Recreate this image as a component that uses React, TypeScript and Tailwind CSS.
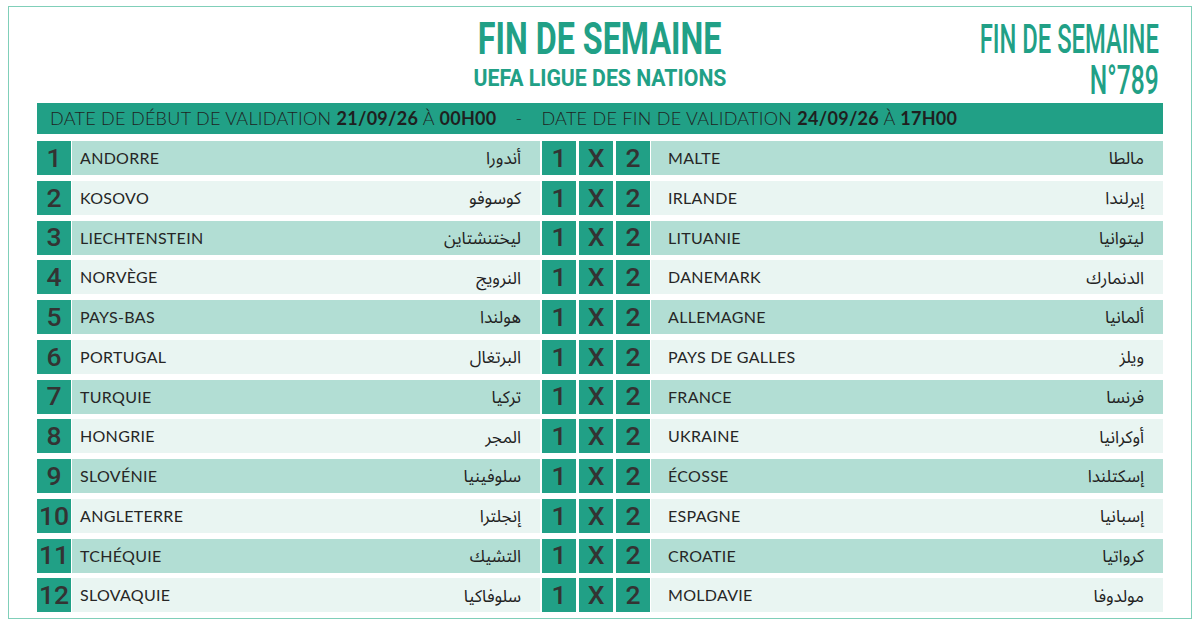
const rows = [
  { n: 1, home: "ANDORRE", homeAr: "أندورا", away: "MALTE", awayAr: "مالطا" },
  { n: 2, home: "KOSOVO", homeAr: "كوسوفو", away: "IRLANDE", awayAr: "إيرلندا" },
  { n: 3, home: "LIECHTENSTEIN", homeAr: "ليختنشتاين", away: "LITUANIE", awayAr: "ليتوانيا" },
  { n: 4, home: "NORVÈGE", homeAr: "النرويج", away: "DANEMARK", awayAr: "الدنمارك" },
  { n: 5, home: "PAYS-BAS", homeAr: "هولندا", away: "ALLEMAGNE", awayAr: "ألمانيا" },
  { n: 6, home: "PORTUGAL", homeAr: "البرتغال", away: "PAYS DE GALLES", awayAr: "ويلز" },
  { n: 7, home: "TURQUIE", homeAr: "تركيا", away: "FRANCE", awayAr: "فرنسا" },
  { n: 8, home: "HONGRIE", homeAr: "المجر", away: "UKRAINE", awayAr: "أوكرانيا" },
  { n: 9, home: "SLOVÉNIE", homeAr: "سلوفينيا", away: "ÉCOSSE", awayAr: "إسكتلندا" },
  { n: 10, home: "ANGLETERRE", homeAr: "إنجلترا", away: "ESPAGNE", awayAr: "إسبانيا" },
  { n: 11, home: "TCHÉQUIE", homeAr: "التشيك", away: "CROATIE", awayAr: "كرواتيا" },
  { n: 12, home: "SLOVAQUIE", homeAr: "سلوفاكيا", away: "MOLDAVIE", awayAr: "مولدوفا" },
];

function Box({ children }: { children: React.ReactNode }) {
  return (
    <div className="w-[34px] shrink-0 bg-[#21a086] flex items-center justify-center font-['Roboto',sans-serif] font-medium text-[26.5px] leading-none text-[#333]">
      {children}
    </div>
  );
}

function Team({ name, ar, className }: { name: string; ar: string; className: string }) {
  return (
    <div className={className}>
      <span className="font-['Lato',sans-serif] text-[16px] tracking-[0.3px] text-[#262626]">{name}</span>
      <span dir="rtl" className="font-['Noto_Sans_Arabic','DejaVu_Sans',sans-serif] text-[17px] text-[#222] pt-[4px]">
        {ar}
      </span>
    </div>
  );
}

export default function App() {
  return (
    <div className="w-[1200px] h-[630px] bg-white pl-[8px] pt-[6px]">
      <div className="w-[1184px] h-[613px] border border-[#80cfb9] px-[28px] flex flex-col">
        <header className="h-[96px] shrink-0 grid grid-cols-[1fr_auto_1fr]">
          <div />
          <div className="flex flex-col items-center pt-[11px] text-[#21a086] font-['Roboto',sans-serif] font-bold">
            <div className="text-[43.6px] leading-[43.6px] scale-x-[0.74]">FIN DE SEMAINE</div>
            <div className="mt-[4px] text-[24px] leading-[24px] scale-x-[0.885]">UEFA LIGUE DES NATIONS</div>
          </div>
          <div className="flex flex-col items-end pt-[12px] pr-[4px] text-[#21a086] font-['Roboto',sans-serif] font-medium text-[41px] leading-[40.5px]">
            <div className="origin-right scale-x-[0.58]">FIN DE SEMAINE</div>
            <div className="origin-right scale-x-[0.6]">N°789</div>
          </div>
        </header>

        <div className="h-[31px] shrink-0 bg-[#21a086] flex items-center pl-[13px] font-['Lato',sans-serif] font-light text-[18px] tracking-[0.28px] text-[#1f1f1f]">
          <span>
            DATE DE DÉBUT DE VALIDATION <b className="font-bold">21/09/26</b> À <b className="font-bold">00H00</b>
          </span>
          <span className="mx-[19px]">-</span>
          <span>
            DATE DE FIN DE VALIDATION <b className="font-bold">24/09/26</b> À <b className="font-bold">17H00</b>
          </span>
        </div>

        <div className="mt-[7px] flex flex-col gap-[5.75px]">
          {rows.map((r) => {
            const bg = r.n % 2 === 1 ? "bg-[#b2ded4]" : "bg-[#e9f5f2]";
            return (
              <div key={r.n} className="flex h-[34px]">
                <Box>{r.n}</Box>
                <Team
                  name={r.home}
                  ar={r.homeAr}
                  className={`ml-[1px] w-[468px] shrink-0 ${bg} flex items-center justify-between pl-[8px] pr-[19px]`}
                />
                <div className="ml-[2px] flex gap-[3px]">
                  <Box>1</Box>
                  <Box>X</Box>
                  <Box>2</Box>
                </div>
                <Team
                  name={r.away}
                  ar={r.awayAr}
                  className={`ml-[1px] flex-1 ${bg} flex items-center justify-between pl-[17px] pr-[19px]`}
                />
              </div>
            );
          })}
        </div>
      </div>
    </div>
  );
}
